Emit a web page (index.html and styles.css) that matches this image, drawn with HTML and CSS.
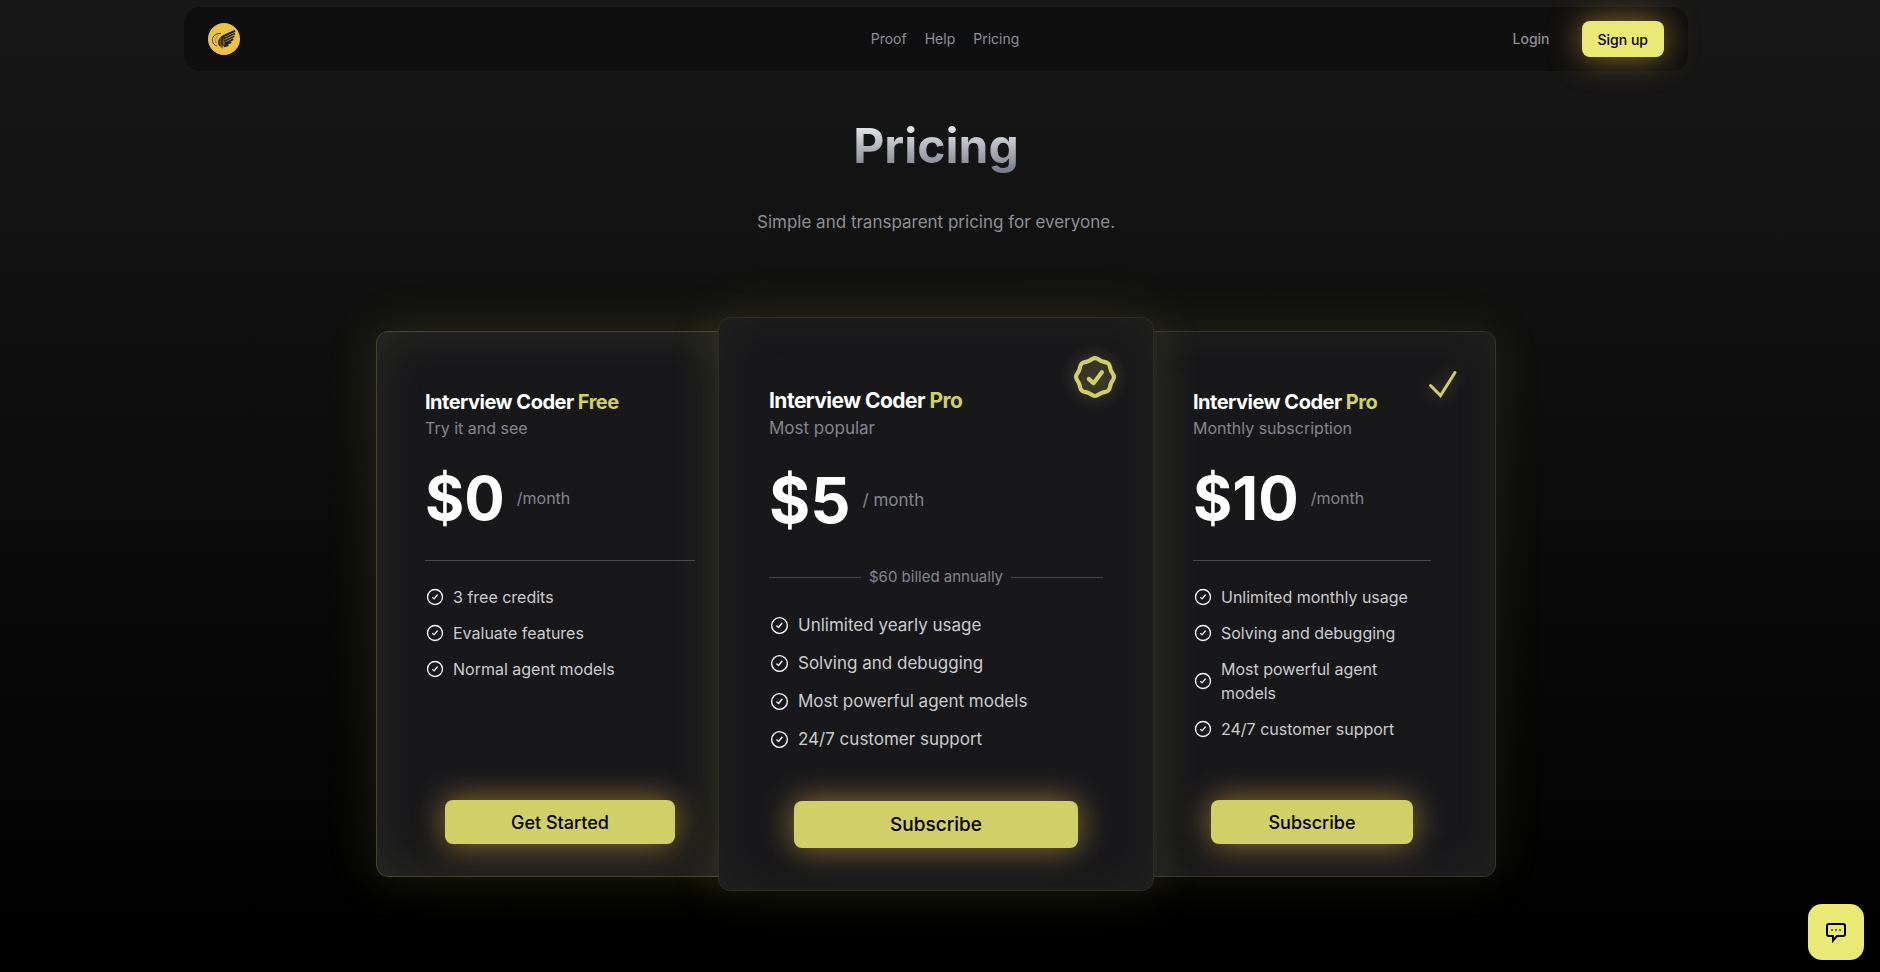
FILE: index.html
```html
<!DOCTYPE html>
<html lang="en">
<head>
    <meta charset="UTF-8">
    <meta name="viewport" content="width=device-width, initial-scale=1.0">
    <title>Pricing - Interview Coder</title>
    <link rel="stylesheet" href="styles.css">
</head>
<body>
    <!-- Shared icons -->
    <svg class="sprite" aria-hidden="true">
        <symbol id="icon-check-circle" viewBox="0 0 20 20">
            <circle cx="10" cy="10" r="7.5" fill="none" stroke="currentColor" stroke-width="1.3"/>
            <path d="M7.5 10.4l1.6 1.5 3.2-4" fill="none" stroke="currentColor" stroke-width="1.3" stroke-linecap="round" stroke-linejoin="round"/>
        </symbol>
    </svg>

    <div class="page">
        <header class="navbar">
            <a class="logo" href="#" aria-label="Interview Coder">
                <svg viewBox="0 0 32 32">
                    <circle cx="16" cy="16" r="16" fill="#edc048"/>
                    <path d="M13 10.500C7 10 3.500 14 4.500 18.500c.5 2.200 2.200 4 4.500 4.500" fill="none" stroke="#54481f" stroke-width="1"/>
                    <path d="M10.500 12.500c-3 1.500-3.500 5-2 8" fill="none" stroke="#96792f" stroke-width=".8"/>
                    <path d="M16 13c-4 1-6.500 3.500-6 7 .3 2 1.500 3.500 3 4l2 2-.2-2.500c2.500 0 4-1 4.500-3z" fill="#6b5a29"/>
                    <path d="M12 16c-1.500 2-1.500 4.500 0 7M14.500 15.500c-1 2-1 4.500 0 7" fill="none" stroke="#1d2019" stroke-width="1.2"/>
                    <path d="M27 7.800L18 12c-2 .8-3.500 1.500-5 3" fill="none" stroke="#101712" stroke-width="2"/>
                    <path d="M27 10.500L15.500 15.800M26.500 13.300l-10 4.700M25.300 16.200l-8.300 4M23.300 19.200l-6.500 2.800M20.500 22.200l-4.500 1.300" fill="none" stroke="#1d2019" stroke-width="1.5"/>
                </svg>
            </a>
            <nav class="nav-links">
                <a href="#">Proof</a>
                <a href="#">Help</a>
                <a href="#">Pricing</a>
            </nav>
            <div class="nav-actions">
                <a class="login" href="#">Login</a>
                <button class="signup" type="button">Sign up</button>
            </div>
        </header>

        <main>
            <section class="intro">
                <h1>Pricing</h1>
                <p>Simple and transparent pricing for everyone.</p>
            </section>

            <section class="plans">
                <article class="plan plan-free">
                    <h2>Interview Coder <span>Free</span></h2>
                    <p class="tagline">Try it and see</p>
                    <div class="price">
                        <span class="amount">$0</span>
                        <span class="period">/month</span>
                    </div>
                    <div class="divider"></div>
                    <ul class="features">
                        <li><svg><use href="#icon-check-circle"/></svg>3 free credits</li>
                        <li><svg><use href="#icon-check-circle"/></svg>Evaluate features</li>
                        <li><svg><use href="#icon-check-circle"/></svg>Normal agent models</li>
                    </ul>
                    <button class="plan-button" type="button">Get Started</button>
                </article>

                <article class="plan plan-popular">
                    <svg class="badge" viewBox="0 0 24 24">
                        <path d="M12 2.9C13.3 2.9 13.96 3.88 15.16 4.38C16.36 4.88 17.51 4.65 18.43 5.57C19.35 6.49 19.12 7.64 19.62 8.84C20.12 10.04 21.1 10.7 21.1 12C21.1 13.3 20.12 13.96 19.62 15.16C19.12 16.36 19.35 17.51 18.43 18.43C17.51 19.35 16.36 19.12 15.16 19.62C13.96 20.12 13.3 21.1 12 21.1C10.7 21.1 10.04 20.12 8.84 19.62C7.64 19.12 6.49 19.35 5.57 18.43C4.65 17.51 4.88 16.36 4.38 15.16C3.88 13.96 2.9 13.3 2.9 12C2.9 10.7 3.88 10.04 4.38 8.84C4.88 7.64 4.65 6.49 5.57 5.57C6.49 4.65 7.64 4.88 8.84 4.38C10.04 3.88 10.7 2.9 12 2.9z"/>
                        <path d="M9 12.900l2.300 2.100 4-5.300"/>
                    </svg>
                    <h2>Interview Coder <span>Pro</span></h2>
                    <p class="tagline">Most popular</p>
                    <div class="price">
                        <span class="amount">$5</span>
                        <span class="period">/ month</span>
                    </div>
                    <div class="divider">$60 billed annually</div>
                    <ul class="features">
                        <li><svg><use href="#icon-check-circle"/></svg>Unlimited yearly usage</li>
                        <li><svg><use href="#icon-check-circle"/></svg>Solving and debugging</li>
                        <li><svg><use href="#icon-check-circle"/></svg>Most powerful agent models</li>
                        <li><svg><use href="#icon-check-circle"/></svg>24/7 customer support</li>
                    </ul>
                    <button class="plan-button" type="button">Subscribe</button>
                </article>

                <article class="plan plan-monthly">
                    <svg class="badge" viewBox="0 0 48 48">
                        <path d="M11.500 25.500l10 10L36 12.500"/>
                    </svg>
                    <h2>Interview Coder <span>Pro</span></h2>
                    <p class="tagline">Monthly subscription</p>
                    <div class="price">
                        <span class="amount">$10</span>
                        <span class="period">/month</span>
                    </div>
                    <div class="divider"></div>
                    <ul class="features">
                        <li><svg><use href="#icon-check-circle"/></svg>Unlimited monthly usage</li>
                        <li><svg><use href="#icon-check-circle"/></svg>Solving and debugging</li>
                        <li><svg><use href="#icon-check-circle"/></svg>Most powerful agent models</li>
                        <li><svg><use href="#icon-check-circle"/></svg>24/7 customer support</li>
                    </ul>
                    <button class="plan-button" type="button">Subscribe</button>
                </article>
            </section>
        </main>
    </div>

    <button class="chat-button" type="button" aria-label="Open chat">
        <svg viewBox="0 0 24 24">
            <path d="M5 4h14a2 2 0 0 1 2 2v8a2 2 0 0 1-2 2h-6l-4 4.500V16H5a2 2 0 0 1-2-2V6a2 2 0 0 1 2-2z" fill="none" stroke="#000" stroke-width="2"/>
            <path d="M7 9h2v2H7zM11 9h2v2h-2zM15 9h2v2h-2z" fill="#75743b"/>
        </svg>
    </button>
</body>
</html>
```
FILE: styles.css
```css
* {
    box-sizing: border-box;
}

body {
    font-family: Inter, "Liberation Sans", sans-serif;
    background: linear-gradient(#181818, #000) no-repeat #000;
    color: #fff;
    margin: 0;
    min-height: 100vh;
}

h1, h2, p, ul {
    margin: 0;
    padding: 0;
}

a {
    color: inherit;
    text-decoration: none;
}

button {
    border: none;
    font-family: inherit;
    font-weight: 500;
    color: #000;
    cursor: pointer;
}

.sprite {
    position: absolute;
    width: 0;
    height: 0;
}

.page {
    padding: 7px 8px 80px 0;
}

/* Navigation */
.navbar {
    display: grid;
    grid-template-columns: 1fr auto 1fr;
    align-items: center;
    max-width: 1504px;
    height: 64px;
    margin: 0 auto;
    padding: 0 24px;
    border-radius: 16px;
    background: #0f0f0f;
    color: #8e8e96;
    font-size: 14px;
    line-height: 20px;
}

.logo {
    width: 32px;
    height: 32px;
}

.logo svg {
    display: block;
}

.nav-links {
    display: flex;
    gap: 18px;
    padding-left: 18px;
}

.nav-actions {
    display: flex;
    justify-content: flex-end;
    align-items: center;
    gap: 32px;
}

.login {
    font-weight: 500;
}

.signup {
    height: 36px;
    padding: 0 16px;
    border-radius: 8px;
    background: #ebe976;
    font-size: 14px;
    box-shadow: 0 0 32px rgba(235, 180, 72, 0.6);
}

/* Heading */
.intro {
    padding: 45px 24px 95px;
    text-align: center;
}

.intro h1 {
    display: inline-block;
    background: linear-gradient(#fff, #6b7280);
    background-clip: text;
    -webkit-background-clip: text;
    color: transparent;
    font-size: 48px;
    line-height: 60px;
}

.intro p {
    margin-top: 32px;
    color: #8e8e96;
    font-size: 17px;
    line-height: 28px;
}

/* Plans */
.plans {
    display: grid;
    grid-template-columns: 352fr 416fr 352fr;
    max-width: 1120px;
    margin: 0 auto;
}

.plan {
    position: relative;
    display: flex;
    flex-direction: column;
    min-height: 546px;
    padding: 56px 48px 32px;
    border: 1px solid #45442a;
    border-radius: 12px;
    background: #18181b;
    box-shadow: 0 0 50px rgba(209, 207, 104, 0.15), inset 0 0 50px rgba(209, 207, 104, 0.1);
}

.plan-free {
    margin-right: -16px;
}

.plan-monthly {
    margin-left: -16px;
    padding: 56px 64px 32px;
    border-color: #36352a;
    box-shadow: 0 0 50px rgba(209, 207, 104, 0.1), inset 0 0 50px rgba(209, 207, 104, 0.06);
}

.plan-popular {
    z-index: 1;
    margin: -14px -10px;
    padding: 68px 50px 42px;
    border-color: #2e2d22;
    box-shadow: 0 0 50px rgba(209, 207, 104, 0.15), inset 0 0 50px rgba(209, 207, 104, 0.06);
}

.plan h2 {
    font-size: 20px;
    line-height: 28px;
    letter-spacing: -0.025em;
}

.plan h2 span {
    color: #d1cf68;
}

.tagline,
.period {
    color: #85858d;
    font-size: 16px;
    line-height: 24px;
}

.price {
    display: flex;
    align-items: center;
    gap: 12px;
    margin: 28px 0 32px;
}

.amount {
    font-size: 60px;
    font-weight: 700;
    line-height: 60px;
}

.divider {
    display: flex;
    align-items: center;
    gap: 8px;
    color: #85858d;
    font-size: 15px;
    line-height: 20px;
}

.divider::before,
.divider::after {
    content: "";
    flex: 1;
    height: 1px;
    background: #4a4a4d;
}

.divider:empty {
    gap: 0;
}

.features {
    display: flex;
    flex-direction: column;
    gap: 12px;
    margin-top: 24px;
    color: #ccccce;
    font-size: 16px;
    line-height: 24px;
    list-style: none;
}

.features li {
    display: flex;
    align-items: center;
    gap: 8px;
}

.features svg {
    flex: none;
    width: 20px;
    height: 20px;
    color: #fff;
}

.plan-button {
    width: 85%;
    height: 44px;
    margin: auto auto 0;
    border-radius: 8px;
    background: #d1cf68;
    font-size: 18px;
    box-shadow: 0 0 32px rgba(235, 180, 72, 0.6);
}

.badge {
    position: absolute;
    top: 28px;
    right: 28px;
    width: 48px;
    height: 48px;
    fill: none;
    stroke: #d1cf68;
    stroke-width: 3;
    stroke-linecap: round;
    filter: drop-shadow(0 0 8px rgba(209, 207, 104, 0.4));
}

/* The popular plan is drawn a step larger than its neighbours */
.plan-popular h2 {
    font-size: 21px;
    line-height: 30px;
}

.plan-popular .tagline,
.plan-popular .period,
.plan-popular .features {
    font-size: 17px;
    line-height: 25px;
}

.plan-popular .price {
    margin: 28px 0 35px;
}

.plan-popular .amount {
    font-size: 63px;
    line-height: 63px;
}

.plan-popular .features {
    gap: 13px;
    margin-top: 26px;
}

.plan-popular .features svg {
    width: 21px;
    height: 21px;
}

.plan-popular .plan-button {
    height: 47px;
    font-size: 19px;
}

.plan-popular .badge {
    top: 34px;
    right: 33px;
    width: 50px;
    height: 50px;
    stroke-width: 2;
    stroke-linejoin: round;
}

.plan-popular .badge path:first-child {
    fill: rgba(209, 207, 104, 0.06);
}

/* Chat */
.chat-button {
    position: fixed;
    right: 16px;
    bottom: 12px;
    display: flex;
    align-items: center;
    justify-content: center;
    width: 56px;
    height: 56px;
    padding: 0;
    border-radius: 14px;
    background: #ebe976;
}

.chat-button svg {
    width: 24px;
    height: 24px;
}
```
